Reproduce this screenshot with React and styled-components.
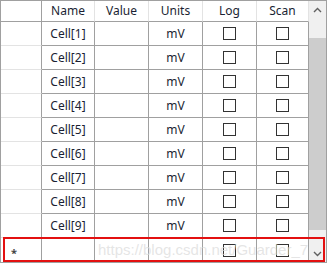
import React from 'react';
import styled, { createGlobalStyle } from 'styled-components';

const GlobalStyle = createGlobalStyle`
    * { box-sizing: border-box; }
    body {
        margin: 0;
        background: #fff;
        font-family: 'Noto Sans', 'Liberation Sans', sans-serif;
    }
`;

const GRID = '#a0a0a0';
const LIGHT = '#e3e3e3';

const Frame = styled.div`
    position: relative;
    width: 327px;
    height: 263px;
    border: 1px solid ${GRID};
    display: flex;
    background: #fff;
    overflow: hidden;
`;

const Table = styled.div`
    display: grid;
    grid-template-columns: 41px 53px 54px 54px 54px 52px;
    grid-template-rows: 21px repeat(9, 24px) 24px;
    width: 308px;
`;

const HeaderCell = styled.div`
    display: flex;
    align-items: center;
    justify-content: center;
    font-size: 12px;
    color: #1a1f33;
    border-bottom: 1px solid ${GRID};
    border-right: 1px solid ${p => (p.$corner ? GRID : LIGHT)};
    padding-bottom: 1px;
`;

const RowHeader = styled.div`
    display: flex;
    align-items: center;
    padding: 4px 0 0 10px;
    border-right: 1px solid ${GRID};
    border-bottom: ${p => (p.$last ? 'none' : `1px solid ${LIGHT}`)};
    color: #444;
    font-size: 11px;
    font-weight: bold;
`;

const Cell = styled.div`
    display: flex;
    align-items: center;
    justify-content: center;
    font-size: 12px;
    color: #1a1f33;
    border-right: 1px solid ${GRID};
    border-bottom: ${p => (p.$last ? 'none' : `1px solid ${GRID}`)};
`;

const Box = styled.span`
    width: 13px;
    height: 13px;
    border: 1px solid #333;
    background: #fff;
`;

const ScrollBar = styled.div`
    width: 17px;
    display: flex;
    flex-direction: column;
    background: #f0f0f0;
`;

const Arrow = styled.div`
    height: 17px;
    display: flex;
    align-items: center;
    justify-content: center;
`;

const Thumb = styled.div`
    margin-top: 20px;
    height: 192px;
    background: #cdcdcd;
`;

const Gap = styled.div`
    flex: 1;
`;

const Highlight = styled.div`
    position: absolute;
    left: 2px;
    top: 236px;
    width: 322px;
    height: 25px;
    border: 2px solid #e31010;
    pointer-events: none;
`;

const Watermark = styled.div`
    position: absolute;
    left: 97px;
    top: 240px;
    font-family: 'Liberation Sans', Arial, sans-serif;
    font-size: 15px;
    color: rgba(218, 218, 218, 0.7);
    white-space: nowrap;
`;

const Chevron = ({ up }) => (
    <svg width='9' height='6' viewBox='0 0 9 6'>
        <path
            d={up ? 'M1 5 L4.5 1.5 L8 5' : 'M1 1 L4.5 4.5 L8 1'}
            fill='none'
            stroke='#606060'
            strokeWidth='1.4'
        />
    </svg>
);

const columns = ['Name', 'Value', 'Units', 'Log', 'Scan'];
const rows = [1, 2, 3, 4, 5, 6, 7, 8, 9];

const App = () => {
    return (
        <>
            <GlobalStyle />
            <Frame>
                <Table>
                    <HeaderCell $corner />
                    {columns.map(c => (
                        <HeaderCell key={c}>{c}</HeaderCell>
                    ))}
                    {rows.map(n => (
                        <React.Fragment key={n}>
                            <RowHeader />
                            <Cell>Cell[{n}]</Cell>
                            <Cell />
                            <Cell>mV</Cell>
                            <Cell>
                                <Box />
                            </Cell>
                            <Cell>
                                <Box />
                            </Cell>
                        </React.Fragment>
                    ))}
                    <RowHeader $last>*</RowHeader>
                    <Cell $last />
                    <Cell $last />
                    <Cell $last />
                    <Cell $last>
                        <Box />
                    </Cell>
                    <Cell $last>
                        <Box />
                    </Cell>
                </Table>
                <ScrollBar>
                    <Arrow>
                        <Chevron up />
                    </Arrow>
                    <Thumb />
                    <Gap />
                    <Arrow>
                        <Chevron />
                    </Arrow>
                </ScrollBar>
                <Watermark>https://blog.csdn.net/Guarder_7</Watermark>
                <Highlight />
            </Frame>
        </>
    );
};

export default App;
